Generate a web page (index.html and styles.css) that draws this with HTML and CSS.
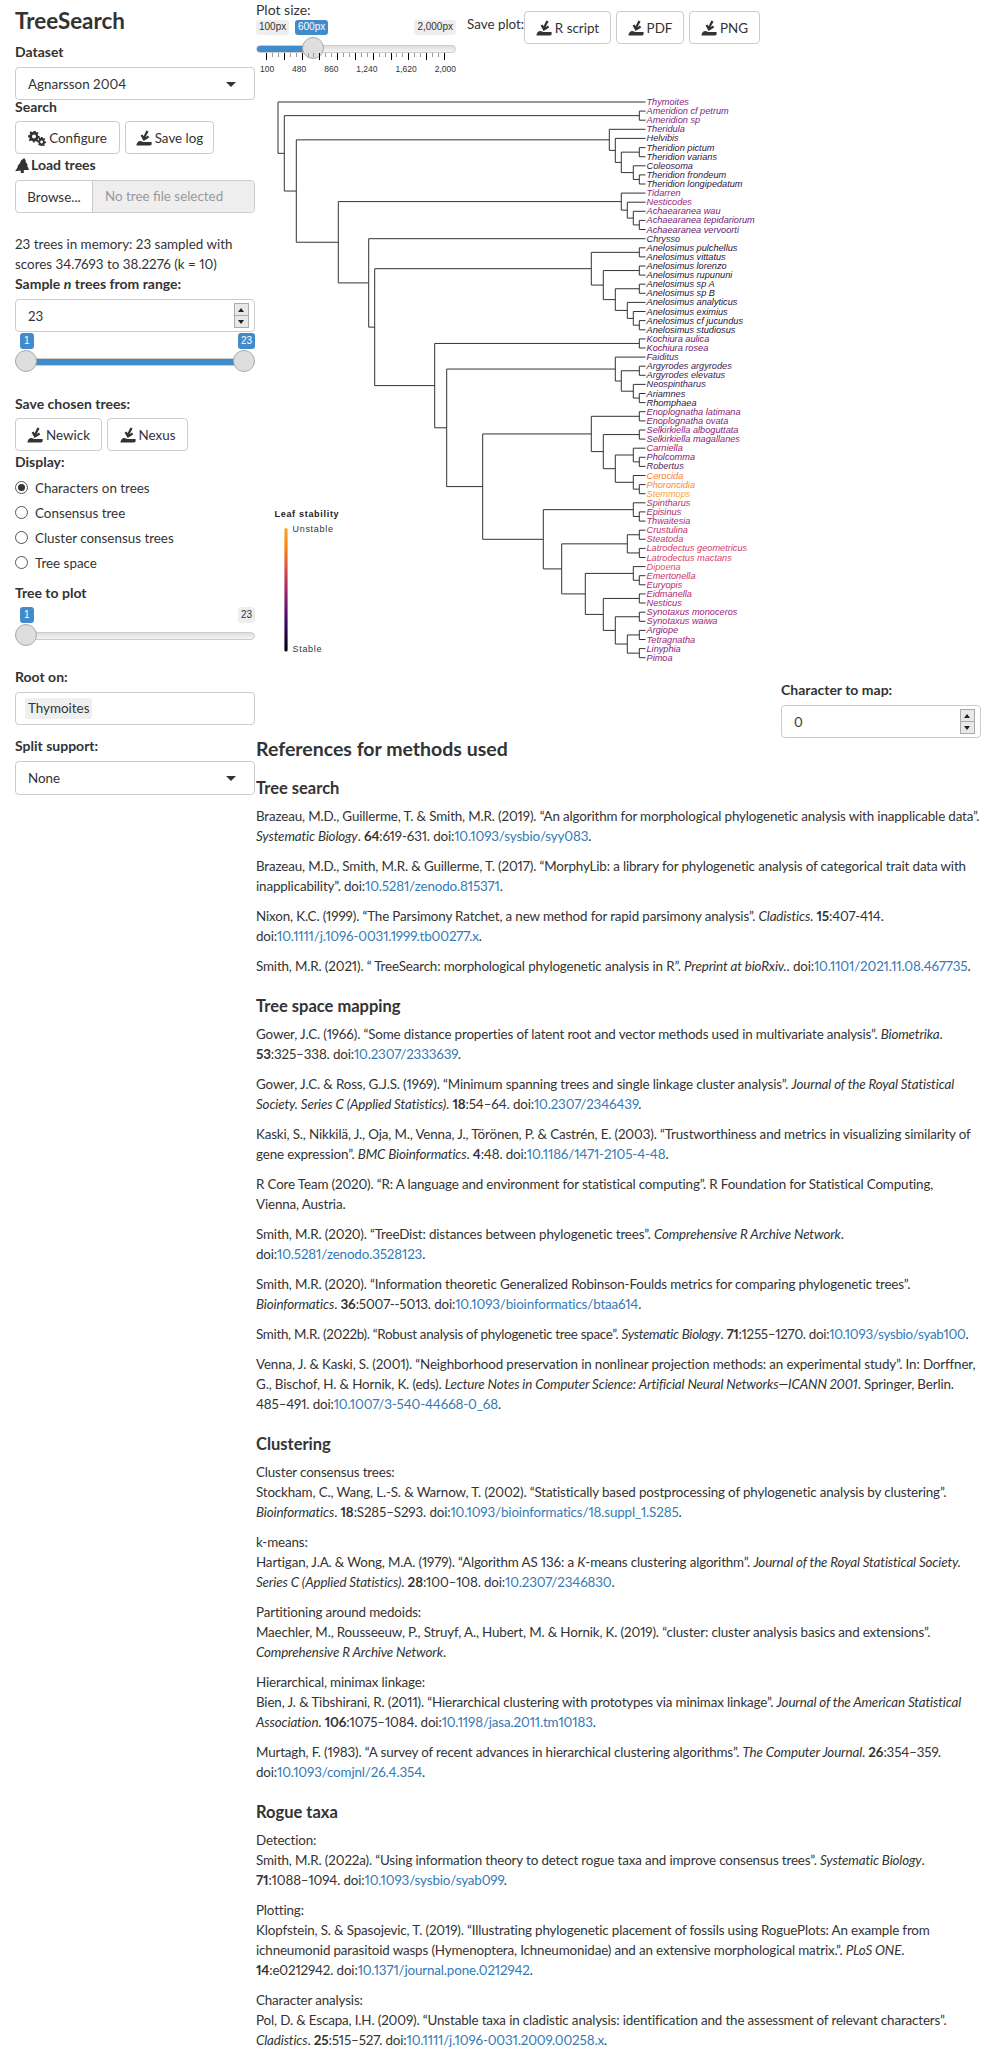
FILE: index.html
```html
<!DOCTYPE html>
<html lang="en">
<head>
  <meta charset="UTF-8" />
  <title>TreeSearch</title>
  <link rel="stylesheet" href="styles.css">
</head>
<body>

<svg class="icon-defs" width="0" height="0">
  <symbol id="i-save" viewBox="0 0 16 16">
    <path d="M10.4 0.4 L12.6 1.6 L9.4 7.2 L12 5.6 L13.2 7.4 L7.6 11 L4.6 5.4 L6.6 4.4 L7.6 6.2 Z"/>
    <path d="M0.4 15.4 C0.6 13 2.2 11 4.4 11 C5.6 11 6.4 12 7.4 12 H15.6 V14 C15.6 15 15 15.4 14 15.4 Z"/>
  </symbol>
  <symbol id="i-cogs" viewBox="0 0 18 16">
    <path d="M6 1 L7.6 1 L8 2.6 L9.6 2 L10.6 3.2 L9.6 4.6 L10.4 6 L11.8 6.2 V7.8 L10.2 8.2 L9.6 9.6 L10.4 11 L9.2 12 L7.8 11 L7 11.2 L6.4 12.6 H5 L4.6 11 L3.2 10.4 L1.8 11.2 L0.8 10 L1.8 8.6 L1.2 7.4 L0 7 V5.4 L1.6 5 L2.2 3.6 L1.6 2.2 L2.8 1.2 L4.2 2.2 Z M6 4.6 A2 2 0 1 0 6 8.6 A2 2 0 1 0 6 4.6 Z" fill-rule="evenodd"/>
    <path d="M13 7 H14.6 L15 8.4 L16.4 8 L17.2 9.2 L16.2 10.2 L16.6 11.2 L18 11.6 V13 L16.6 13.4 L16.2 14.4 L17 15.4 L16 16 L14.8 15.4 L13.8 16 H12.6 L12.2 15 L11 15.4 L10.2 14.4 L10.8 13.4 L10.4 12.6 L9.4 12.2 V10.8 L10.6 10.4 L11 9.4 L10.4 8.4 L11.4 7.6 L12.6 8.2 Z M13.6 10.6 A1.4 1.4 0 1 0 13.6 13.4 A1.4 1.4 0 1 0 13.6 10.6 Z" fill-rule="evenodd"/>
  </symbol>
  <symbol id="i-tree" viewBox="0 0 14 15">
    <path d="M9 0 C10 1 10.6 2 11 3.4 L10.4 3.6 C11.4 5 12.4 6.2 12.8 7.6 L12 7.8 C13 9.2 13.6 10.6 14 12 H8.8 V15 H5.8 V12.6 L0 13.2 C1.2 11.6 2.2 10 3 8.4 L2.4 8 C4.2 6.4 5.6 4 6.4 2 C7.4 1.6 8.2 0.8 9 0 Z"/>
  </symbol>
</svg>

<div class="page">

  <aside class="sidebar">
    <h2 class="app-title">TreeSearch</h2>

    <div class="field-label dataset-label">Dataset</div>
    <div class="select-box">Agnarsson 2004<span class="caret"></span></div>

    <div class="field-label flush">Search</div>
    <div class="btn-row">
      <button class="btn btn-configure"><svg class="icon icon-cogs"><use href="#i-cogs"/></svg>Configure</button>
      <button class="btn btn-savelog"><svg class="icon"><use href="#i-save"/></svg>Save log</button>
    </div>

    <div class="field-label flush load-label"><svg class="icon-tree"><use href="#i-tree"/></svg>Load trees</div>
    <div class="file-group">
      <span class="file-browse">Browse...</span>
      <span class="file-name">No tree file selected</span>
    </div>

    <p class="tree-status">23 trees in memory: 23 sampled with<br>scores 34.7693 to 38.2276 (k = 10)</p>

    <div class="field-label">Sample <i>n</i> trees from range:</div>
    <div class="input-box">23
      <span class="spinner"><span class="spin-up"></span><span class="spin-down"></span></span>
    </div>

    <div class="slider slider-range">
      <span class="bubble bubble-on bubble-left">1</span>
      <span class="bubble bubble-on bubble-right">23</span>
      <div class="track"><div class="track-fill track-fill-all"></div></div>
      <span class="thumb thumb-left"></span>
      <span class="thumb thumb-right"></span>
    </div>

    <div class="field-label save-label">Save chosen trees:</div>
    <div class="btn-row">
      <button class="btn btn-newick"><svg class="icon"><use href="#i-save"/></svg>Newick</button>
      <button class="btn btn-nexus"><svg class="icon"><use href="#i-save"/></svg>Nexus</button>
    </div>

    <div class="field-label flush display-label">Display:</div>
    <div class="radio-list">
      <div class="radio-row"><span class="radio radio-on"></span>Characters on trees</div>
      <div class="radio-row"><span class="radio"></span>Consensus tree</div>
      <div class="radio-row"><span class="radio"></span>Cluster consensus trees</div>
      <div class="radio-row"><span class="radio"></span>Tree space</div>
    </div>

    <div class="field-label plot-label">Tree to plot</div>
    <div class="slider slider-single">
      <span class="bubble bubble-on bubble-left">1</span>
      <span class="bubble bubble-off bubble-right">23</span>
      <div class="track"></div>
      <span class="thumb thumb-left"></span>
    </div>

    <div class="field-label root-label">Root on:</div>
    <div class="input-box input-tag"><span class="tag">Thymoites</span></div>

    <div class="field-label split-label">Split support:</div>
    <div class="select-box">None<span class="caret"></span></div>
  </aside>

  <main class="content">
    <div class="plot-head">
      <div class="size-slider">
        <div class="size-title">Plot size:</div>
        <div class="size-bubbles">
          <span class="bubble bubble-off size-min">100px</span>
          <span class="bubble bubble-on size-val">600px</span>
          <span class="bubble bubble-off size-max">2,000px</span>
        </div>
        <div class="track size-track"><div class="track-fill size-fill"></div></div>
        <span class="thumb size-thumb"></span>
        <div class="ticks"></div>
        <div class="tick-labels">
          <span>100</span><span>480</span><span>860</span><span>1,240</span><span>1,620</span><span>2,000</span>
        </div>
      </div>
      <div class="save-plot">
        <span class="save-plot-label">Save plot:</span>
        <button class="btn btn-rscript"><svg class="icon"><use href="#i-save"/></svg>R script</button>
        <button class="btn btn-pdf"><svg class="icon"><use href="#i-save"/></svg>PDF</button>
        <button class="btn btn-png"><svg class="icon"><use href="#i-save"/></svg>PNG</button>
      </div>
    </div>

    <svg class="tree-plot" width="600" height="600" viewBox="256 80 600 600">
      <defs>
        <linearGradient id="inferno" x1="0" y1="1" x2="0" y2="0">
          <stop offset="0" stop-color="#000004"/>
          <stop offset="0.25" stop-color="#420a68"/>
          <stop offset="0.45" stop-color="#8a226a"/>
          <stop offset="0.65" stop-color="#d34a4f"/>
          <stop offset="0.85" stop-color="#f8850f"/>
          <stop offset="1" stop-color="#fca636"/>
        </linearGradient>
      </defs>
      <path class="branch" d="
        M645.5 102 H278 V153.35 H284.3
        M639.3 115.65 H284.3 V191.05 H296.3
        M645.5 111.1 H639.3 V120.2 H645.5
        M609.3 139.85 H296.3 V242.25 H338.3
        M645.5 129.3 H609.3 V150.4 H615.3
        M645.5 138.4 H615.3 V162.4 H621.3
        M639.3 152.15 H621.3 V172.6 H633.3
        M645.5 147.6 H639.3 V156.7 H645.5
        M645.5 165.8 H633.3 V179.45 H639.3
        M645.5 174.9 H639.3 V184 H645.5
        M621.3 201.6 H338.3 V282.9 H368.7
        M645.5 193.1 H621.3 V210.15 H627.3
        M645.5 202.2 H627.3 V218.1 H633.3
        M645.5 211.3 H633.3 V224.95 H639.3
        M645.5 220.4 H639.3 V229.5 H645.5
        M645.5 238.7 H368.7 V327.15 H374.7
        M591.3 268.7 H374.7 V385.6 H434.7
        M639.3 252.35 H591.3 V285.07 H603.3
        M645.5 247.8 H639.3 V256.9 H645.5
        M639.3 270.55 H603.3 V299.6 H615.3
        M645.5 266 H639.3 V275.1 H645.5
        M639.3 288.75 H615.3 V310.4 H627.3
        M645.5 284.2 H639.3 V293.3 H645.5
        M645.5 302.4 H627.3 V318.35 H633.3
        M645.5 311.5 H633.3 V325.2 H639.3
        M645.5 320.6 H639.3 V329.8 H645.5
        M639.3 343.45 H434.7 V427.8 H446.7
        M645.5 338.9 H639.3 V348 H645.5
        M615.3 369.05 H446.7 V486.6 H482.7
        M645.5 357.1 H615.3 V381 H621.3
        M639.3 370.75 H621.3 V391.2 H633.3
        M645.5 366.2 H639.3 V375.3 H645.5
        M645.5 384.4 H633.3 V398.05 H639.3
        M645.5 393.5 H639.3 V402.6 H645.5
        M591.3 433.95 H482.7 V539.3 H543.3
        M639.3 416.3 H591.3 V451.6 H603.3
        M645.5 411.7 H639.3 V420.9 H645.5
        M639.3 434.55 H603.3 V468.7 H615.3
        M645.5 430 H639.3 V439.1 H645.5
        M633.3 455 H615.3 V482.3 H633.3
        M645.5 448.2 H633.3 V461.85 H639.3
        M645.5 457.3 H639.3 V466.4 H645.5
        M645.5 475.5 H633.3 V489.15 H639.3
        M645.5 484.6 H639.3 V493.7 H645.5
        M633.3 509.65 H543.3 V568.9 H561.7
        M645.5 502.8 H633.3 V516.5 H639.3
        M645.5 511.9 H639.3 V521.1 H645.5
        M627.3 543.85 H561.7 V593.9 H585.3
        M639.3 534.75 H627.3 V552.95 H639.3
        M645.5 530.2 H639.3 V539.3 H645.5
        M645.5 548.4 H639.3 V557.5 H645.5
        M633.3 573.4 H585.3 V614.4 H603.3
        M645.5 566.6 H633.3 V580.25 H639.3
        M645.5 575.7 H639.3 V584.8 H645.5
        M639.3 598.45 H603.3 V630.4 H615.3
        M645.5 593.9 H639.3 V603 H645.5
        M639.3 616.75 H615.3 V644.05 H627.3
        M645.5 612.2 H639.3 V621.3 H645.5
        M639.3 634.95 H627.3 V653.15 H639.3
        M645.5 630.4 H639.3 V639.5 H645.5
        M645.5 648.6 H639.3 V657.7 H645.5
      "/>
      <g class="leaves">
        <text x="646.5" y="105" fill="#8c2481">Thymoites</text>
        <text x="646.5" y="114.1" fill="#7c1f7e">Ameridion cf petrum</text>
        <text x="646.5" y="123.2" fill="#7c1f7e">Ameridion sp</text>
        <text x="646.5" y="132.3" fill="#6a1a6e">Theridula</text>
        <text x="646.5" y="141.4" fill="#3a1a4a">Helvibis</text>
        <text x="646.5" y="150.6" fill="#2a1540">Theridion pictum</text>
        <text x="646.5" y="159.7" fill="#2a1540">Theridion varians</text>
        <text x="646.5" y="168.8" fill="#35184a">Coleosoma</text>
        <text x="646.5" y="177.9" fill="#2a1540">Theridion frondeum</text>
        <text x="646.5" y="187" fill="#2a1540">Theridion longipedatum</text>
        <text x="646.5" y="196.1" fill="#901c80">Tidarren</text>
        <text x="646.5" y="205.2" fill="#981c7c">Nesticodes</text>
        <text x="646.5" y="214.3" fill="#80187c">Achaearanea wau</text>
        <text x="646.5" y="223.4" fill="#701878">Achaearanea tepidariorum</text>
        <text x="646.5" y="232.5" fill="#601870">Achaearanea vervoorti</text>
        <text x="646.5" y="241.7" fill="#3a1a4e">Chrysso</text>
        <text x="646.5" y="250.8" fill="#1d1233">Anelosimus pulchellus</text>
        <text x="646.5" y="259.9" fill="#1d1233">Anelosimus vittatus</text>
        <text x="646.5" y="269" fill="#1d1233">Anelosimus lorenzo</text>
        <text x="646.5" y="278.1" fill="#1d1233">Anelosimus rupununi</text>
        <text x="646.5" y="287.2" fill="#1d1233">Anelosimus sp A</text>
        <text x="646.5" y="296.3" fill="#1d1233">Anelosimus sp B</text>
        <text x="646.5" y="305.4" fill="#1d1233">Anelosimus analyticus</text>
        <text x="646.5" y="314.5" fill="#1d1233">Anelosimus eximius</text>
        <text x="646.5" y="323.6" fill="#1d1233">Anelosimus cf jucundus</text>
        <text x="646.5" y="332.8" fill="#1d1233">Anelosimus studiosus</text>
        <text x="646.5" y="341.9" fill="#6a1570">Kochiura aulica</text>
        <text x="646.5" y="351" fill="#6a1570">Kochiura rosea</text>
        <text x="646.5" y="360.1" fill="#5a1570">Faiditus</text>
        <text x="646.5" y="369.2" fill="#3a1a50">Argyrodes argyrodes</text>
        <text x="646.5" y="378.3" fill="#3a1a50">Argyrodes elevatus</text>
        <text x="646.5" y="387.4" fill="#3a1a50">Neospintharus</text>
        <text x="646.5" y="396.5" fill="#2a1540">Ariamnes</text>
        <text x="646.5" y="405.6" fill="#2a1540">Rhomphaea</text>
        <text x="646.5" y="414.7" fill="#8a1a70">Enoplognatha latimana</text>
        <text x="646.5" y="423.9" fill="#8a1a70">Enoplognatha ovata</text>
        <text x="646.5" y="433" fill="#8a1a80">Selkirkiella alboguttata</text>
        <text x="646.5" y="442.1" fill="#8a1a80">Selkirkiella magallanes</text>
        <text x="646.5" y="451.2" fill="#a0206a">Carniella</text>
        <text x="646.5" y="460.3" fill="#7a1a70">Pholcomma</text>
        <text x="646.5" y="469.4" fill="#5a1a60">Robertus</text>
        <text x="646.5" y="478.5" fill="#f97c30">Cerocida</text>
        <text x="646.5" y="487.6" fill="#fb8a35">Phoroncidia</text>
        <text x="646.5" y="496.7" fill="#fba238">Stemmops</text>
        <text x="646.5" y="505.8" fill="#b52f70">Spintharus</text>
        <text x="646.5" y="514.9" fill="#a5286c">Episinus</text>
        <text x="646.5" y="524.1" fill="#b22c70">Thwaitesia</text>
        <text x="646.5" y="533.2" fill="#c0306a">Crustulina</text>
        <text x="646.5" y="542.3" fill="#c8366c">Steatoda</text>
        <text x="646.5" y="551.4" fill="#d03c6c">Latrodectus geometricus</text>
        <text x="646.5" y="560.5" fill="#d83f68">Latrodectus mactans</text>
        <text x="646.5" y="569.6" fill="#e8505a">Dipoena</text>
        <text x="646.5" y="578.7" fill="#c8306c">Emertonella</text>
        <text x="646.5" y="587.8" fill="#b52a70">Euryopis</text>
        <text x="646.5" y="596.9" fill="#b0286e">Eidmanella</text>
        <text x="646.5" y="606" fill="#a3246e">Nesticus</text>
        <text x="646.5" y="615.2" fill="#9e2076">Synotaxus monoceros</text>
        <text x="646.5" y="624.3" fill="#9a1f76">Synotaxus waiwa</text>
        <text x="646.5" y="633.4" fill="#8e1c78">Argiope</text>
        <text x="646.5" y="642.5" fill="#a0247a">Tetragnatha</text>
        <text x="646.5" y="651.6" fill="#8a1a78">Linyphia</text>
        <text x="646.5" y="660.7" fill="#8a1a76">Pimoa</text>
      </g>
      <text class="legend-title" x="274.5" y="517">Leaf stability</text>
      <rect x="284.4" y="528" width="3.2" height="123.6" rx="1.6" fill="url(#inferno)"/>
      <text class="legend-text" x="292.5" y="532">Unstable</text>
      <text class="legend-text" x="292.5" y="652">Stable</text>
    </svg>

    <div class="char-map">
      <div class="field-label">Character to map:</div>
      <div class="input-box">0
        <span class="spinner"><span class="spin-up"></span><span class="spin-down"></span></span>
      </div>
    </div>

    <section class="refs">
      <h3 class="refs-title">References for methods used</h3>

      <h4>Tree search</h4>
      <p>Brazeau, M.D., Guillerme, T. &amp; Smith, M.R. (2019). “An algorithm for morphological phylogenetic analysis with inapplicable data”.<br><i>Systematic Biology</i>. <b>64</b>:619-631. doi:<a href="#">10.1093/sysbio/syy083</a>.</p>
      <p>Brazeau, M.D., Smith, M.R. &amp; Guillerme, T. (2017). “MorphyLib: a library for phylogenetic analysis of categorical trait data with<br>inapplicability”. doi:<a href="#">10.5281/zenodo.815371</a>.</p>
      <p>Nixon, K.C. (1999). “The Parsimony Ratchet, a new method for rapid parsimony analysis”. <i>Cladistics</i>. <b>15</b>:407-414.<br>doi:<a href="#">10.1111/j.1096-0031.1999.tb00277.x</a>.</p>
      <p>Smith, M.R. (2021). “ TreeSearch: morphological phylogenetic analysis in R”. <i>Preprint at bioRxiv.</i>. doi:<a href="#">10.1101/2021.11.08.467735</a>.</p>

      <h4>Tree space mapping</h4>
      <p>Gower, J.C. (1966). “Some distance properties of latent root and vector methods used in multivariate analysis”. <i>Biometrika</i>.<br><b>53</b>:325–338. doi:<a href="#">10.2307/2333639</a>.</p>
      <p>Gower, J.C. &amp; Ross, G.J.S. (1969). “Minimum spanning trees and single linkage cluster analysis”. <i>Journal of the Royal Statistical<br>Society. Series C (Applied Statistics)</i>. <b>18</b>:54–64. doi:<a href="#">10.2307/2346439</a>.</p>
      <p>Kaski, S., Nikkilä, J., Oja, M., Venna, J., Törönen, P. &amp; Castrén, E. (2003). “Trustworthiness and metrics in visualizing similarity of<br>gene expression”. <i>BMC Bioinformatics</i>. <b>4</b>:48. doi:<a href="#">10.1186/1471-2105-4-48</a>.</p>
      <p>R Core Team (2020). “R: A language and environment for statistical computing”. R Foundation for Statistical Computing,<br>Vienna, Austria.</p>
      <p>Smith, M.R. (2020). “TreeDist: distances between phylogenetic trees”. <i>Comprehensive R Archive Network</i>.<br>doi:<a href="#">10.5281/zenodo.3528123</a>.</p>
      <p>Smith, M.R. (2020). “Information theoretic Generalized Robinson-Foulds metrics for comparing phylogenetic trees”.<br><i>Bioinformatics</i>. <b>36</b>:5007--5013. doi:<a href="#">10.1093/bioinformatics/btaa614</a>.</p>
      <p class="ref-tight">Smith, M.R. (2022b). “Robust analysis of phylogenetic tree space”. <i>Systematic Biology</i>. <b>71</b>:1255–1270. doi:<a href="#">10.1093/sysbio/syab100</a>.</p>
      <p>Venna, J. &amp; Kaski, S. (2001). “Neighborhood preservation in nonlinear projection methods: an experimental study”. In: Dorffner,<br>G., Bischof, H. &amp; Hornik, K. (eds). <i>Lecture Notes in Computer Science: Artificial Neural Networks—ICANN 2001</i>. Springer, Berlin.<br>485–491. doi:<a href="#">10.1007/3-540-44668-0_68</a>.</p>

      <h4>Clustering</h4>
      <p>Cluster consensus trees:<br>Stockham, C., Wang, L.-S. &amp; Warnow, T. (2002). “Statistically based postprocessing of phylogenetic analysis by clustering”.<br><i>Bioinformatics</i>. <b>18</b>:S285–S293. doi:<a href="#">10.1093/bioinformatics/18.suppl_1.S285</a>.</p>
      <p>k-means:<br>Hartigan, J.A. &amp; Wong, M.A. (1979). “Algorithm AS 136: a <i>K</i>-means clustering algorithm”. <i>Journal of the Royal Statistical Society.<br>Series C (Applied Statistics)</i>. <b>28</b>:100–108. doi:<a href="#">10.2307/2346830</a>.</p>
      <p>Partitioning around medoids:<br>Maechler, M., Rousseeuw, P., Struyf, A., Hubert, M. &amp; Hornik, K. (2019). “cluster: cluster analysis basics and extensions”.<br><i>Comprehensive R Archive Network</i>.</p>
      <p>Hierarchical, minimax linkage:<br>Bien, J. &amp; Tibshirani, R. (2011). “Hierarchical clustering with prototypes via minimax linkage”. <i>Journal of the American Statistical<br>Association</i>. <b>106</b>:1075–1084. doi:<a href="#">10.1198/jasa.2011.tm10183</a>.</p>
      <p>Murtagh, F. (1983). “A survey of recent advances in hierarchical clustering algorithms”. <i>The Computer Journal</i>. <b>26</b>:354–359.<br>doi:<a href="#">10.1093/comjnl/26.4.354</a>.</p>

      <h4>Rogue taxa</h4>
      <p>Detection:<br>Smith, M.R. (2022a). “Using information theory to detect rogue taxa and improve consensus trees”. <i>Systematic Biology</i>.<br><b>71</b>:1088–1094. doi:<a href="#">10.1093/sysbio/syab099</a>.</p>
      <p>Plotting:<br>Klopfstein, S. &amp; Spasojevic, T. (2019). “Illustrating phylogenetic placement of fossils using RoguePlots: An example from<br>ichneumonid parasitoid wasps (Hymenoptera, Ichneumonidae) and an extensive morphological matrix.”. <i>PLoS ONE</i>.<br><b>14</b>:e0212942. doi:<a href="#">10.1371/journal.pone.0212942</a>.</p>
      <p>Character analysis:<br>Pol, D. &amp; Escapa, I.H. (2009). “Unstable taxa in cladistic analysis: identification and the assessment of relevant characters”.<br><i>Cladistics</i>. <b>25</b>:515–527. doi:<a href="#">10.1111/j.1096-0031.2009.00258.x</a>.</p>
    </section>
  </main>
</div>

</body>
</html>
```
FILE: styles.css
```css
* {
  box-sizing: border-box;
}

body {
  margin: 0;
  font-family: Lato, sans-serif;
  font-size: 13.4px;
  line-height: 20px;
  font-feature-settings: "pnum";
  color: #333;
  background: #fff;
}

.icon-defs {
  position: absolute;
}

.page {
  display: flex;
  align-items: flex-start;
}

/* sidebar */
.sidebar {
  width: 240px;
  margin-left: 15px;
  flex: none;
}

.app-title {
  margin: 7px 0 8px;
  font-size: 22.4px;
  line-height: 27px;
  font-weight: 700;
}

.field-label {
  font-size: 14px;
  font-weight: 700;
  margin-bottom: 5px;
}

.field-label.flush {
  line-height: 14px;
  margin-bottom: 7px;
}

.field-label.load-label {
  display: flex;
  align-items: center;
  height: 14px;
  margin-top: 4px;
  margin-bottom: 8px;
}

.icon-tree {
  width: 14px;
  height: 15px;
  margin-right: 2px;
  flex: none;
  fill: #333;
}

.select-box,
.input-box {
  position: relative;
  height: 33px;
  padding: 6px 12px;
  background: #fff;
  border: 1px solid #ccc;
  border-radius: 4px;
}

.sidebar > .select-box:last-child {
  height: 34px;
}

.caret {
  position: absolute;
  right: 18px;
  top: 14px;
  border-top: 5px solid #333;
  border-left: 5px solid transparent;
  border-right: 5px solid transparent;
}

.btn {
  height: 33px;
  padding: 0;
  font-family: inherit;
  font-size: 13.4px;
  color: #333;
  background: #fff;
  border: 1px solid #ccc;
  border-radius: 4px;
}

.btn-row {
  display: flex;
  gap: 5px;
}

.icon {
  width: 16px;
  height: 16px;
  margin-right: 3px;
  vertical-align: -3px;
  fill: #333;
}

.icon-cogs {
  width: 18px;
}

.btn-configure { width: 105px; }
.btn-savelog { width: 89px; }
.btn-newick { width: 87px; }
.btn-nexus { width: 81px; }

.file-group {
  display: flex;
  height: 33px;
  border: 1px solid #ccc;
  border-radius: 4px;
  overflow: hidden;
}

.file-browse {
  width: 77px;
  padding: 6px 0;
  text-align: center;
  border-right: 1px solid #ccc;
}

.file-name {
  flex: 1;
  padding: 5px 12px;
  color: #999;
  background: #eee;
}

.tree-status {
  margin: 21px 0 0;
}

.spinner {
  position: absolute;
  right: 5px;
  top: 3px;
  width: 15px;
  height: 25px;
  display: flex;
  flex-direction: column;
  border: 1px solid #aaa;
  background: #e8e8e8;
}

.spin-up,
.spin-down {
  position: relative;
  flex: 1;
}

.spin-down {
  border-top: 1px solid #aaa;
}

.spin-up::after,
.spin-down::after {
  content: "";
  position: absolute;
  left: 3px;
  top: 4px;
  border-left: 3.5px solid transparent;
  border-right: 3.5px solid transparent;
}

.spin-up::after {
  border-bottom: 4px solid #222;
}

.spin-down::after {
  border-top: 4px solid #222;
}

/* sliders */
.slider {
  position: relative;
  height: 40px;
  margin-top: 1px;
}

.slider-range {
  margin-bottom: 21px;
}

.slider-single {
  height: 40px;
  margin-top: 0;
}

.bubble {
  position: absolute;
  top: 0;
  padding: 1px 3px;
  font-family: "Liberation Sans", sans-serif;
  font-size: 10px;
  line-height: 14px;
  border-radius: 3px;
}

.bubble-on {
  color: #fff;
  background: #428bca;
}

.bubble-off {
  color: #333;
  background: #eee;
}

.bubble-left {
  left: 5px;
  padding: 1px 4px;
}

.bubble-right {
  right: 0;
}

.track {
  position: absolute;
  left: 0;
  right: 0;
  top: 25px;
  height: 8px;
  background: linear-gradient(#ddd, #f5f5f5);
  border: 1px solid #ccc;
  border-radius: 4px;
  overflow: hidden;
}

.track-fill {
  height: 100%;
  background: #428bca;
}

.track-fill-all {
  width: 100%;
}

.thumb {
  position: absolute;
  top: 17px;
  width: 22px;
  height: 22px;
  background: #dedede;
  border: 1px solid #ababab;
  border-radius: 50%;
}

.thumb-left {
  left: 0;
}

.thumb-right {
  right: 0;
}

.field-label.save-label {
  margin-top: 21px;
  margin-bottom: 4px;
}

.field-label.display-label {
  margin-top: 4px;
  margin-bottom: 6px;
}

.radio-row {
  display: flex;
  align-items: center;
  height: 25px;
}

.radio {
  position: relative;
  width: 13px;
  height: 13px;
  margin-right: 7px;
  border: 1px solid #555;
  border-radius: 50%;
}

.radio-on::after {
  content: "";
  position: absolute;
  left: 2px;
  top: 2px;
  width: 7px;
  height: 7px;
  border-radius: 50%;
  background: #333;
}

.field-label.plot-label {
  margin-top: 8px;
  margin-bottom: 4px;
}

.field-label.root-label {
  margin-top: 20px;
}

.input-tag {
  padding: 5px 9px;
}

.tag {
  display: inline-block;
  padding: 0 3px;
  line-height: 21px;
  background: #efefef;
  border-radius: 3px;
}

.field-label.split-label {
  margin-top: 11px;
}

/* main column */
.content {
  width: 726px;
  margin-left: 1px;
  flex: none;
}

.plot-head {
  display: flex;
  height: 80px;
}

.size-slider {
  position: relative;
  width: 200px;
  height: 80px;
}

.size-title {
  line-height: 20px;
  font-size: 14px;
}

.size-bubbles .bubble {
  top: 20px;
  padding: 0 3px 1px;
}

.size-min { left: 0; }
.size-val { left: 39px; }
.size-max { right: 0; }

.size-track {
  top: 45px;
}

.size-fill {
  width: 56px;
}

.size-thumb {
  left: 46px;
  top: 37px;
}

.ticks {
  position: absolute;
  left: 10px;
  right: 10px;
  top: 53px;
  height: 7px;
  background:
    repeating-linear-gradient(90deg, #000 0 1px, transparent 1px 17.8px) 0 0 / 100% 7px no-repeat,
    repeating-linear-gradient(90deg, #999 0 1px, transparent 1px 5.93px) 0 0 / 100% 4px no-repeat;
}

.tick-labels {
  position: absolute;
  left: 0;
  right: 0;
  top: 62px;
  display: flex;
  justify-content: space-between;
  font-family: "Liberation Sans", sans-serif;
  font-size: 8.5px;
  line-height: 14px;
  padding: 0 0 0 4px;
}

.save-plot {
  display: flex;
  align-items: flex-start;
  gap: 5px;
  margin-left: 11px;
  padding-top: 11px;
}

.save-plot-label {
  width: 52px;
  margin-top: 3px;
  white-space: nowrap;
}

.btn-rscript { width: 87px; }
.btn-pdf { width: 68px; }
.btn-png { width: 71px; }

.tree-plot {
  display: block;
}

.branch {
  fill: none;
  stroke: #333;
  stroke-width: 1;
}

.leaves text {
  font-family: "Liberation Sans", sans-serif;
  font-style: italic;
  font-size: 9.2px;
}

.legend-title {
  font-family: "Liberation Sans", sans-serif;
  font-size: 9px;
  font-weight: 700;
  letter-spacing: 0.7px;
  fill: #222;
}

.legend-text {
  font-family: "Liberation Sans", sans-serif;
  font-size: 9px;
  letter-spacing: 0.7px;
  fill: #333;
}

.char-map {
  float: right;
  width: 200px;
  margin-right: 1px;
}

.refs {
  padding-top: 57px;
  font-size: 13.4px;
  letter-spacing: -0.15px;
}

.refs-title {
  margin: 0 0 -3px;
  font-size: 19.5px;
  line-height: 24px;
  font-weight: 700;
  letter-spacing: 0;
}

.refs h4 {
  margin: 20px 0 8px;
  font-size: 16.5px;
  line-height: 20px;
  font-weight: 700;
  letter-spacing: 0;
}

.refs p {
  margin: 0 0 10px;
}

.refs p.ref-tight {
  letter-spacing: -0.3px;
  white-space: nowrap;
}

.refs a {
  color: #337ab7;
  text-decoration: none;
}
```
